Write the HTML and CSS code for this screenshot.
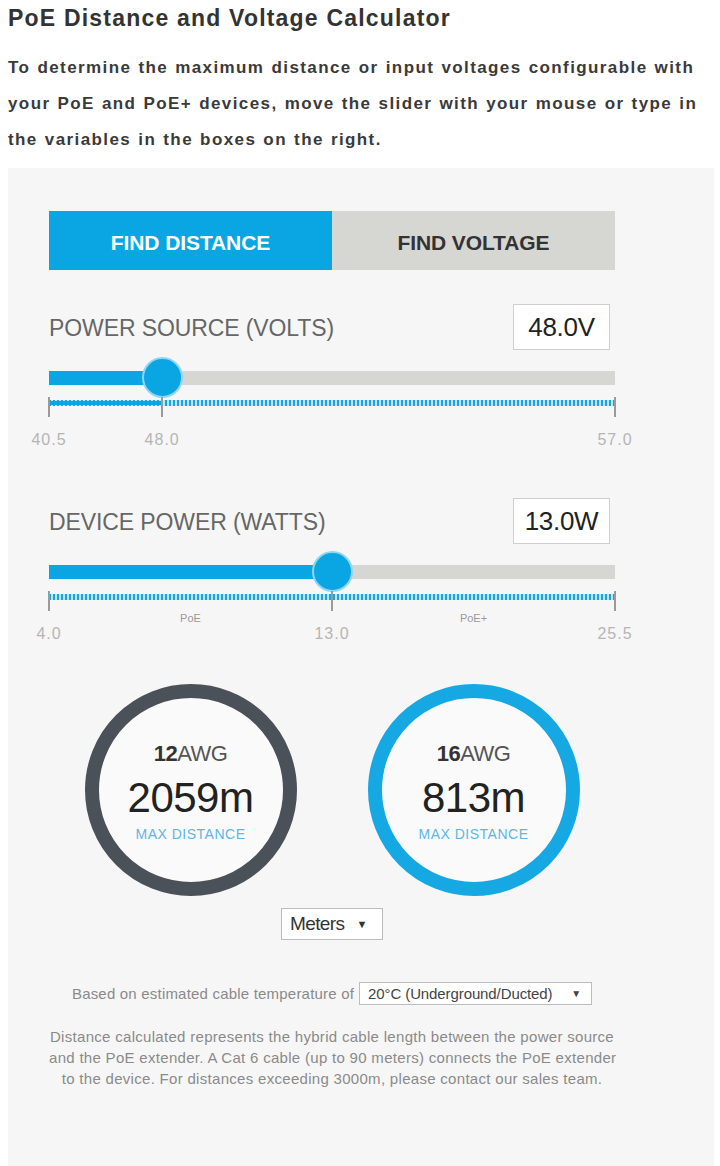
FILE: index.html
```html
<!DOCTYPE html>
<html>
<head>
<meta charset="utf-8">
<link rel="stylesheet" href="styles.css">
</head>
<body>
<h1 class="title">PoE Distance and Voltage Calculator</h1>
<p class="intro">To determine the maximum distance or input voltages configurable with your PoE and PoE+ devices, move the slider with your mouse or type in the variables in the boxes on the right.</p>
<div class="panel">
  <div class="tabs">
    <div class="tab tab-active">FIND DISTANCE</div>
    <div class="tab">FIND VOLTAGE</div>
  </div>

  <div class="field field-first">
    <div class="field-label">POWER SOURCE (VOLTS)</div>
    <div class="field-input">48.0V</div>
  </div>
  <div class="slider">
    <div class="track"><div class="track-fill" style="width:20%"></div></div>
    <div class="knob" style="left:20%"></div>
  </div>
  <div class="scale">
    <div class="scale-dots"></div>
    <div class="scale-solid" style="width:20%"></div>
    <div class="tick" style="left:0%"></div>
    <div class="tick" style="left:20%"></div>
    <div class="tick" style="left:100%"></div>
  </div>
  <div class="scale-labels">
    <span class="val" style="left:0%">40.5</span>
    <span class="val" style="left:20%">48.0</span>
    <span class="val" style="left:100%">57.0</span>
  </div>

  <div class="field">
    <div class="field-label">DEVICE POWER (WATTS)</div>
    <div class="field-input">13.0W</div>
  </div>
  <div class="slider">
    <div class="track"><div class="track-fill" style="width:50%"></div></div>
    <div class="knob" style="left:50%"></div>
  </div>
  <div class="scale">
    <div class="scale-dots"></div>
    <div class="tick" style="left:0%"></div>
    <div class="tick" style="left:50%"></div>
    <div class="tick" style="left:100%"></div>
  </div>
  <div class="scale-labels">
    <span class="band" style="left:25%">PoE</span>
    <span class="band" style="left:75%">PoE+</span>
    <span class="val" style="left:0%">4.0</span>
    <span class="val" style="left:50%">13.0</span>
    <span class="val" style="left:100%">25.5</span>
  </div>

  <div class="results">
    <div class="result">
      <div class="ring ring-dark">
        <div class="awg"><b>12</b>AWG</div>
        <div class="dist">2059m</div>
        <div class="max">MAX DISTANCE</div>
      </div>
    </div>
    <div class="result">
      <div class="ring ring-blue">
        <div class="awg"><b>16</b>AWG</div>
        <div class="dist">813m</div>
        <div class="max">MAX DISTANCE</div>
      </div>
    </div>
  </div>

  <div class="units">
    <div class="select select-units">Meters <span class="arrow">▼</span></div>
  </div>

  <div class="temp">
    <span class="temp-text">Based on estimated cable temperature of</span>
    <div class="select select-temp">20°C (Underground/Ducted) <span class="arrow">▼</span></div>
  </div>

  <p class="note">Distance calculated represents the hybrid cable length between the power source<br>and the PoE extender. A Cat 6 cable (up to 90 meters) connects the PoE extender<br>to the device. For distances exceeding 3000m, please contact our sales team.</p>
</div>
</body>
</html>
```

FILE: styles.css
```css
* { box-sizing: border-box; }
html, body { margin: 0; padding: 0; background: #fff; }
body {
  font-family: "Liberation Sans", Arial, sans-serif;
  color: #333;
  overflow: hidden;
}
.title {
  margin: 0;
  padding: 6px 0 0 8px;
  font-size: 23px;
  line-height: 24px;
  font-weight: bold;
  color: #333;
  letter-spacing: 1.2px;
}
.intro {
  margin: 20px 0 0 0;
  padding: 0 10px 0 8px;
  font-size: 17px;
  line-height: 36px;
  font-weight: bold;
  color: #3a3a3a;
  letter-spacing: 1.4px;
  word-spacing: 1px;
}
.panel {
  margin: 10px 6px 0 8px;
  background: #f6f6f6;
  padding: 43px 99px 200px 41px;
}
.tabs {
  display: flex;
  height: 59px;
}
.tab {
  flex: 1;
  display: flex;
  align-items: center;
  justify-content: center;
  background: #d6d6d3;
  color: #333;
  font-size: 21px;
  font-weight: bold;
  letter-spacing: -0.1px;
  padding-top: 4px;
}
.tab-active {
  background: #0aa6e4;
  color: #fff;
}
.field {
  display: flex;
  align-items: center;
  justify-content: space-between;
  margin-top: 45px;
  height: 46px;
}
.field-first { margin-top: 34px; }
.field-label {
  font-size: 23px;
  color: #666;
  letter-spacing: -0.1px;
  padding-top: 3px;
}
.field-input {
  width: 97px;
  height: 46px;
  margin-right: 5px;
  background: #fff;
  border: 1px solid #cfcfcf;
  display: flex;
  align-items: center;
  justify-content: center;
  font-size: 26px;
  color: #222;
  letter-spacing: -0.3px;
}
.slider {
  position: relative;
  height: 40px;
  margin-top: 7px;
}
.track {
  position: absolute;
  left: 0;
  right: 0;
  top: 14px;
  height: 14px;
  background: #d6d6d3;
}
.track-fill {
  height: 100%;
  background: #0aa6e4;
}
.knob {
  position: absolute;
  top: 0;
  width: 41px;
  height: 41px;
  margin-left: -20px;
  border-radius: 50%;
  background: #0aa6e4;
  border: 2px solid #8fd6f3;
}
.scale {
  position: relative;
  height: 20px;
}
.scale-dots {
  position: absolute;
  left: 0;
  right: 0;
  top: 3px;
  height: 6px;
  background: repeating-linear-gradient(90deg, #1aa3de 0 2px, #bfe6f6 2px 4px);
}
.scale-solid {
  position: absolute;
  left: 0;
  top: 4px;
  height: 4px;
  background: #0aa6e4;
}
.tick {
  position: absolute;
  top: 0;
  width: 2px;
  height: 20px;
  margin-left: -1px;
  background: #9a9a9a;
}
.scale-labels {
  position: relative;
  height: 36px;
}
.val {
  position: absolute;
  top: 13px;
  line-height: 20px;
  font-size: 16px;
  color: #b5b5b5;
  transform: translateX(-50%);
  letter-spacing: 1px;
}
.band {
  position: absolute;
  top: 0;
  line-height: 14px;
  font-size: 11px;
  color: #9a9a9a;
  transform: translateX(-50%);
}
.results {
  display: grid;
  grid-template-columns: 1fr 1fr;
  margin-top: 37px;
}
.result {
  display: flex;
  justify-content: center;
}
.ring {
  width: 212px;
  height: 212px;
  border-radius: 50%;
  border: 14px solid #4b5158;
  background: #fafafa;
  display: flex;
  flex-direction: column;
  align-items: center;
  justify-content: center;
  padding-top: 2px;
}
.ring-blue { border-color: #16a8e3; }
.awg {
  font-size: 22px;
  line-height: 26px;
  color: #555;
  letter-spacing: -0.5px;
}
.awg b { color: #333; }
.dist {
  margin-top: 7px;
  font-size: 42px;
  line-height: 48px;
  color: #222;
  letter-spacing: -0.5px;
}
.max {
  margin-top: 4px;
  font-size: 14px;
  line-height: 16px;
  color: #5db6e6;
  letter-spacing: 0.5px;
}
.units {
  display: flex;
  justify-content: center;
  margin-top: 12px;
}
.select {
  background: #fff;
  border: 1px solid #bdbdbd;
  display: flex;
  align-items: center;
  color: #333;
}
.select-units {
  width: 102px;
  height: 32px;
  padding-left: 8px;
  font-size: 19px;
  letter-spacing: -0.6px;
}
.select-units .arrow {
  font-size: 11px;
  margin-left: 12px;
}
.temp {
  display: flex;
  justify-content: center;
  align-items: center;
  margin-top: 42px;
  height: 23px;
}
.temp-text {
  font-size: 15px;
  color: #8a8a8a;
  letter-spacing: 0.2px;
  margin-right: 5px;
}
.select-temp {
  width: 233px;
  height: 23px;
  padding-left: 8px;
  font-size: 15px;
  letter-spacing: -0.1px;
  color: #444;
}
.select-temp .arrow {
  font-size: 10px;
  margin-left: auto;
  margin-right: 10px;
}
.note {
  margin: 21px 0 0 0;
  text-align: center;
  font-size: 15px;
  line-height: 21px;
  color: #8a8a8a;
  letter-spacing: 0.3px;
  white-space: nowrap;
}
```
